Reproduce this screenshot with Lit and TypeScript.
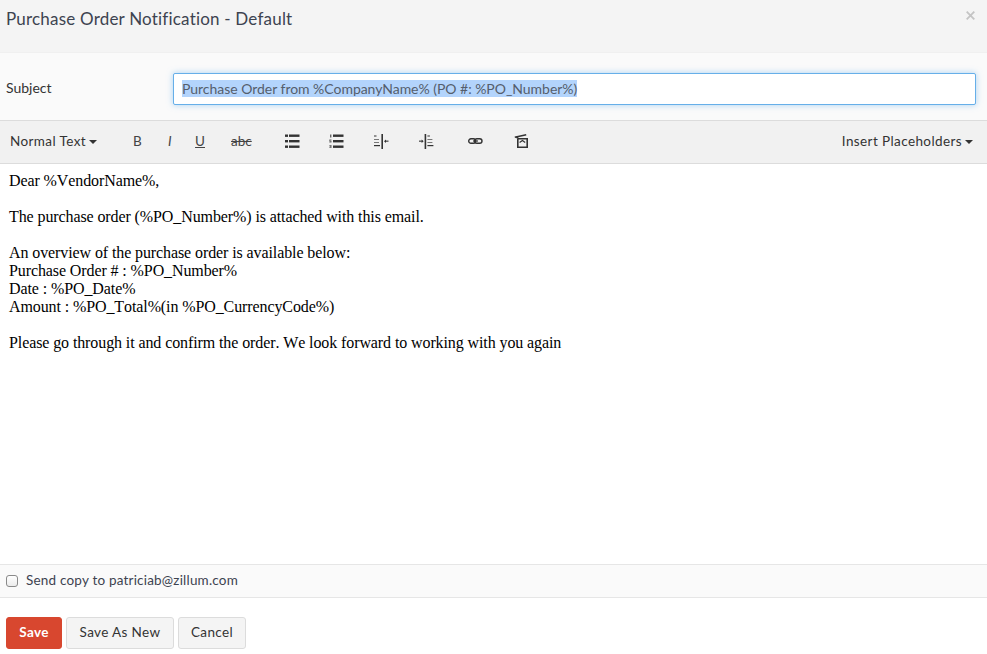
import { LitElement, html, css, svg } from "lit";
import { customElement } from "lit/decorators.js";

const icon = (w: number, h: number, body: unknown) =>
  html`<svg class="ic" width=${w} height=${h} viewBox="0 0 ${w} ${h}">${body}</svg>`;

const ul = icon(15, 14, svg`<g fill="#333"><rect x="0" y="0.5" width="3" height="2.4"/><rect x="4" y="0.5" width="10.5" height="2.4"/><rect x="0" y="6" width="3" height="2.4"/><rect x="4" y="6" width="10.5" height="2.4"/><rect x="0" y="11.5" width="3" height="2.4"/><rect x="4" y="11.5" width="10.5" height="2.4"/></g>`);
const ol = icon(15, 14, svg`<g fill="#333"><path fill="#666" d="M1 0.5h1.4v3H1zM0.3 5.6h2.2v1H1.4v0.4h1.1v1.4H0.3v-0.8h1.2V7.2H0.3zM0.3 11h2.2v3H0.3v-0.7h1.2v-0.4H0.6v-0.7h0.9v-0.4H0.3z"/><rect x="4" y="0.5" width="10.5" height="2.4"/><rect x="4" y="6" width="10.5" height="2.4"/><rect x="4" y="11.5" width="10.5" height="2.4"/></g>`);
const outdent = icon(15, 15, svg`<g fill="#333"><rect x="7.4" y="0" width="1.6" height="15"/><rect x="0" y="1.5" width="2.5" height="1"/><rect x="0" y="5" width="5" height="1" fill="#777"/><rect x="0" y="8" width="5" height="1" fill="#777"/><rect x="0" y="11" width="6" height="1.2"/><rect x="11" y="6.6" width="3.5" height="1.1"/><path d="M10 7.2l2-1.7v3.4z"/></g>`);
const indent = icon(15, 15, svg`<g fill="#333"><rect x="5.6" y="0" width="1.6" height="15"/><rect x="8.4" y="1.5" width="2.5" height="1"/><rect x="8.4" y="5" width="5" height="1" fill="#777"/><rect x="8.4" y="8" width="5" height="1" fill="#777"/><rect x="8.4" y="11" width="6" height="1.2"/><rect x="0" y="6.6" width="3.5" height="1.1"/><path d="M4.6 7.2l-2-1.7v3.4z"/></g>`);
const link = icon(15, 6, svg`<g fill="none" stroke="#333" stroke-width="1.4"><rect x="0.7" y="0.7" width="7" height="4.6" rx="2.3"/><rect x="6.6" y="0.7" width="7.4" height="4.6" rx="2.3"/></g><rect x="5" y="2.4" width="5" height="1.2" fill="#333"/>`);
const media = icon(15, 14, svg`<g fill="none" stroke="#333"><path stroke-width="1.6" d="M3.8 4.8V13.2H13.2V4.8H3.8"/><path stroke-width="1.6" d="M0.8 3.2L12.2 0.8"/><path stroke-width="1.2" d="M5.6 8.6L8.4 6.6L11.2 8.6"/></g><path fill="#333" d="M1.5 2.8l2.3-0.5 1 2.5H3z"/>`);

@customElement("app-root")
export class AppRoot extends LitElement {
  static styles = css`
    :host {
      display: flex;
      flex-direction: column;
      width: 987px;
      height: 654px;
      overflow: hidden;
      background: #fff;
      font-family: Lato, "Open Sans", sans-serif;
      color: #333;
    }
    .head {
      height: 52px;
      box-sizing: border-box;
      flex: none;
      background: #f4f4f4;
      display: flex;
      justify-content: space-between;
      align-items: flex-start;
      padding: 7px 12px 0 6px;
    }
    .title {
      font-size: 17px;
      line-height: 24px;
      letter-spacing: 0.2px;
      color: #3d4350;
    }
    .close {
      width: 9px;
      height: 9px;
      margin-top: 4px;
      display: block;
    }
    .subject {
      height: 69px;
      box-sizing: border-box;
      flex: none;
      background: #fafafa;
      border-top: 1px solid #f0f0f0;
      border-bottom: 1px solid #dcdcdc;
      display: flex;
      align-items: center;
      padding: 4px 11px 0 6px;
    }
    .subject label {
      width: 167px;
      flex: none;
      font-size: 14px;
      color: #333;
      margin-bottom: 2px;
    }
    .input {
      flex: 1;
      height: 32px;
      box-sizing: border-box;
      background: #fff;
      border: 1px solid #66afe9;
      border-radius: 2px;
      box-shadow: 0 0 6px rgba(102, 175, 233, 0.55);
      display: flex;
      align-items: center;
      padding-left: 8px;
      font-size: 14px;
      letter-spacing: -0.03px;
      color: #555e6c;
      white-space: nowrap;
    }
    .input span {
      background: #b3d4fc;
      line-height: 17px;
    }
    .bar {
      height: 43px;
      box-sizing: border-box;
      flex: none;
      background: #f1f1f1;
      border-bottom: 1px solid #dcdcdc;
      display: flex;
      align-items: center;
      padding: 0 14px 2px 10px;
      font-size: 13.5px;
      letter-spacing: 0.4px;
      color: #333;
    }
    .drop {
      display: flex;
      align-items: center;
      gap: 3px;
      white-space: nowrap;
    }
    .caret {
      display: inline-block;
      width: 0;
      height: 0;
      border-left: 4px solid transparent;
      border-right: 4px solid transparent;
      border-top: 4px solid #333;
      margin-top: 2px;
    }
    .ic { display: block; }
    .toolrow {
      display: flex;
      align-items: center;
      margin-left: 36px;
      flex: 1;
    }
    .t { flex: none; font-size: 13.5px; line-height: 16px; color: #444; letter-spacing: 0; }
    .w-b { width: 9px; }
    .w-i { width: 4px; margin-left: 26px; font-style: italic; }
    .w-u { width: 10px; margin-left: 23px; text-decoration: underline; }
    .w-s { width: 22px; margin-left: 26px; text-decoration: line-through; }
    .m1 { margin-left: 32px; }
    .m2 { margin-left: 29px; }
    .m3 { margin-left: 30px; }
    .m4 { margin-left: 30px; }
    .m5 { margin-left: 34px; }
    .m6 { margin-left: 31px; }
    .ph { margin-left: auto; }
    .body {
      flex: 1;
      padding: 8px 9px 0;
      font-family: "Liberation Serif", serif;
      font-size: 16px;
      line-height: 18px;
      font-kerning: none;
      letter-spacing: -0.1px;
      color: #000;
    }
    .body p { margin: 0 0 18px; }
    .copy {
      height: 34px;
      box-sizing: border-box;
      flex: none;
      background: #fafafa;
      border-top: 1px solid #e6e6e6;
      border-bottom: 1px solid #e6e6e6;
      display: flex;
      align-items: center;
      padding: 0 0 2px 6px;
      font-size: 13.5px;
      letter-spacing: 0.2px;
      color: #3d4350;
    }
    .box {
      width: 12px;
      height: 12px;
      box-sizing: border-box;
      margin: 2px 8px 0 0;
      border: 1px solid #8a8a8a;
      border-radius: 3px;
      background: linear-gradient(#fff, #ececec);
    }
    .actions {
      height: 56px;
      box-sizing: border-box;
      flex: none;
      display: flex;
      gap: 4px;
      padding: 19px 0 0 6px;
      align-items: flex-start;
    }
    .btn {
      height: 32px;
      box-sizing: border-box;
      border: 1px solid #dcdcdc;
      border-radius: 3px;
      background: #f4f4f4;
      color: #333;
      font: 13.5px Lato, "Open Sans", sans-serif;
      letter-spacing: 0.35px;
      padding: 0 0 2px;
    }
    .save {
      width: 56px;
      background: #d8472f;
      border-color: #d8472f;
      color: #fff;
      font-weight: 700;
    }
    .new { width: 108px; }
    .cancel { width: 68px; }
  `;

  render() {
    return html`
      <div class="head">
        <div class="title">Purchase Order Notification - Default</div>
        <svg class="close" viewBox="0 0 9 9"><path d="M0.7 0.7L8.3 8.3M8.3 0.7L0.7 8.3" stroke="#c4c4c4" stroke-width="1.8"/></svg>
      </div>
      <div class="subject">
        <label>Subject</label>
        <div class="input"><span>Purchase Order from %CompanyName% (PO #: %PO_Number%)</span></div>
      </div>
      <div class="bar">
        <div class="drop">Normal Text <i class="caret"></i></div>
        <div class="toolrow">
          <span class="t w-b">B</span>
          <span class="t w-i">I</span>
          <span class="t w-u">U</span>
          <span class="t w-s">abc</span>
          <span class="m1">${ul}</span>
          <span class="m2">${ol}</span>
          <span class="m3">${outdent}</span>
          <span class="m4">${indent}</span>
          <span class="m5">${link}</span>
          <span class="m6">${media}</span>
          <div class="drop ph">Insert Placeholders <i class="caret"></i></div>
        </div>
      </div>
      <div class="body">
        <p>Dear %VendorName%,</p>
        <p>The purchase order (%PO_Number%) is attached with this email.</p>
        <p>An overview of the purchase order is available below:<br />Purchase Order # : %PO_Number%<br />Date : %PO_Date%<br />Amount : %PO_Total%(in %PO_CurrencyCode%)</p>
        <p>Please go through it and confirm the order. We look forward to working with you again</p>
      </div>
      <div class="copy"><span class="box"></span>Send copy to patriciab@zillum.com</div>
      <div class="actions">
        <button class="btn save">Save</button>
        <button class="btn new">Save As New</button>
        <button class="btn cancel">Cancel</button>
      </div>
    `;
  }
}
